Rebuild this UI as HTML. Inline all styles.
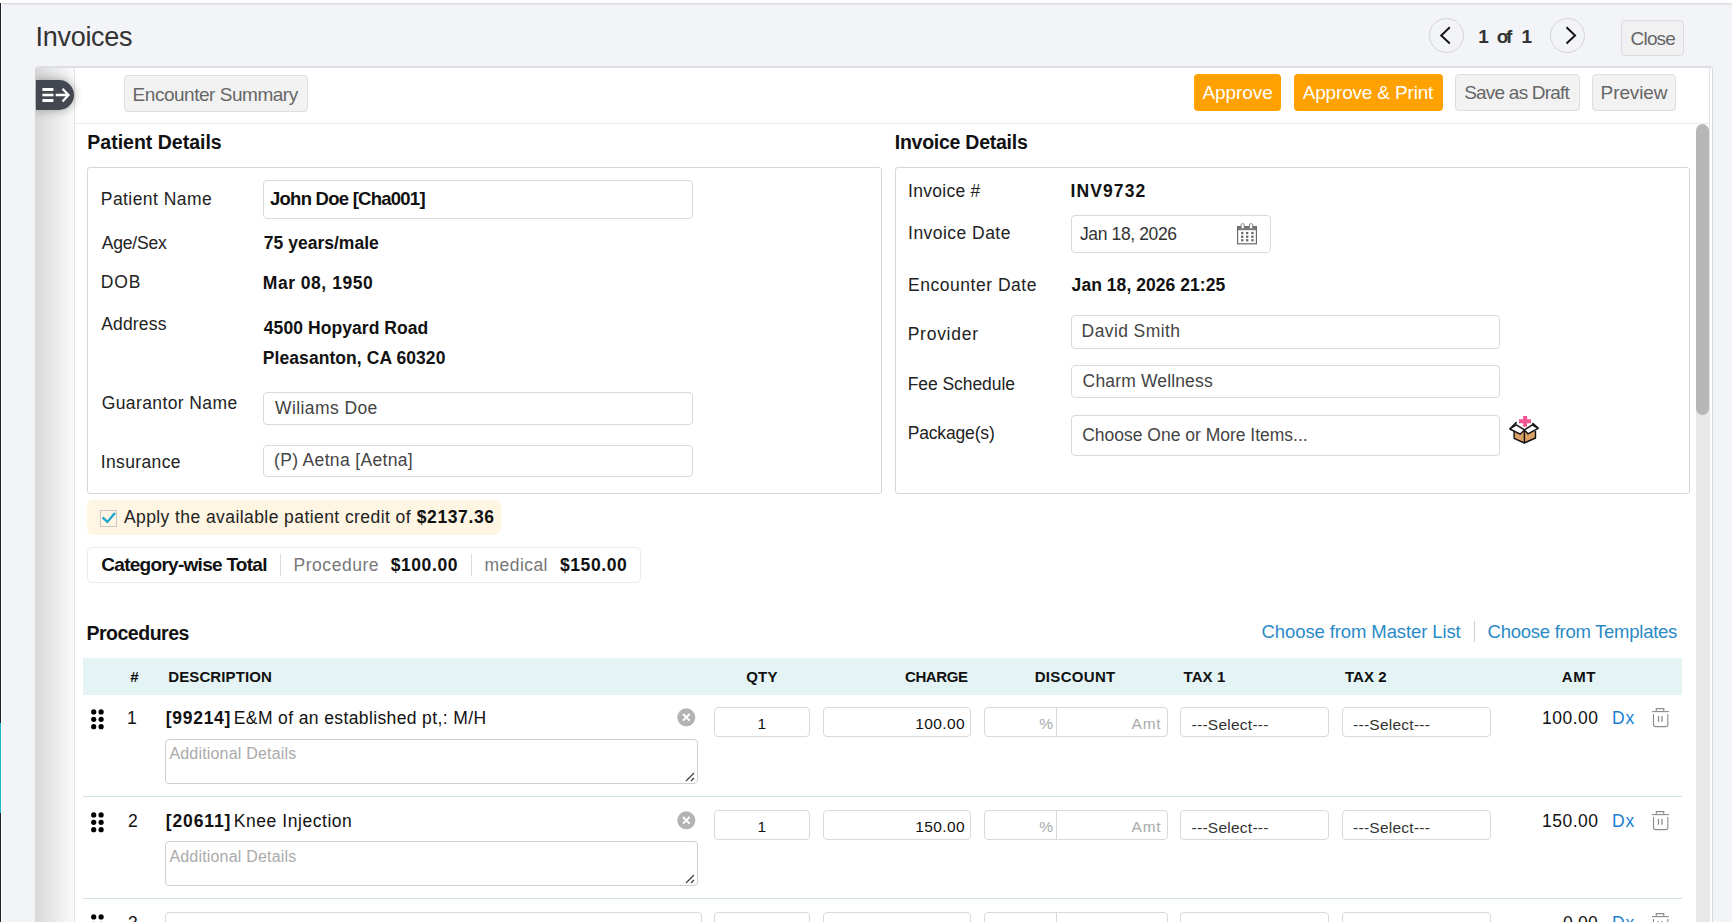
<!DOCTYPE html>
<html><head><meta charset="utf-8"><title>Invoices</title><style>
*{margin:0;padding:0}
html,body{width:1732px;height:922px;overflow:hidden;background:#fff}
body{position:relative;font-family:"Liberation Sans",sans-serif}
.b{position:absolute}
.t{position:absolute;white-space:pre;font-family:"Liberation Sans",sans-serif}
</style></head>
<body>
<div class="b" style="left:2px;top:3px;width:1730px;height:919px;background:#f3f4f8"></div>
<div class="b" style="left:2px;top:3px;width:1730px;height:3px;background:linear-gradient(#dadbdf,#f3f4f8)"></div>
<div class="b" style="left:0px;top:3px;width:1px;height:919px;background:#1d2230"></div>
<div class="b" style="left:0px;top:723px;width:1px;height:90px;background:#1eb4d8"></div>
<div class="b" style="left:1429px;top:18px;width:35px;height:35px;border:1px solid #d4d4d4;border-radius:50%;box-sizing:border-box"></div>
<div class="b" style="left:1550px;top:18px;width:35px;height:35px;border:1px solid #d4d4d4;border-radius:50%;box-sizing:border-box"></div>
<svg class="b" style="left:1429px;top:18px" width="35" height="35"><path d="M20.8 9.3 L12.2 17.5 L20.8 25.5" fill="none" stroke="#111" stroke-width="1.9"/></svg>
<svg class="b" style="left:1550px;top:18px" width="35" height="35"><path d="M16.5 9.3 L25.1 17.5 L16.5 25.5" fill="none" stroke="#111" stroke-width="1.9"/></svg>
<div class="b" style="left:1621px;top:20px;width:63px;height:36px;background:#f1f1f2;border:1px solid #dcdcdc;border-radius:4px;box-sizing:border-box"></div>
<div class="b" style="left:35px;top:66px;width:1678px;height:856px;background:#fff;border-top:2px solid #dedfe2;border-right:1px solid #d8d9dc;border-top-right-radius:4px;border-top-left-radius:4px;box-sizing:border-box"></div>
<div class="b" style="left:35px;top:68px;width:40px;height:854px;overflow:hidden"><div class="b" style="left:0;top:0;width:39px;height:854px;background:linear-gradient(90deg,#d9d7d7 0%,#e5e6e6 40%,#fafafa 100%)"></div><div class="b" style="left:39px;top:0;width:1px;height:854px;background:#e3e3e3"></div><div class="b" style="left:1px;top:12px;width:38px;height:30px;background:#434850;border-radius:0 15px 15px 0;box-shadow:0 0 9px 1px rgba(0,0,0,.28)"></div><svg class="b" style="left:0;top:12px" width="39" height="30"><g fill="#fff"><rect x="7.4" y="8" width="11" height="3"/><rect x="7.4" y="13.7" width="11" height="2.6"/><rect x="7.4" y="19" width="11" height="3"/></g><path d="M20.7 15 H33.5 M27.5 8.8 L33.5 15 L27.5 21.5" fill="none" stroke="#fff" stroke-width="2.3"/></svg></div>
<div class="b" style="left:75px;top:68px;width:30px;height:60px;overflow:hidden"><div class="b" style="left:-39px;top:12px;width:38px;height:30px;border-radius:0 15px 15px 0;box-shadow:0 0 9px 1px rgba(0,0,0,.28)"></div></div>
<div class="b" style="left:1709px;top:68px;width:1px;height:854px;background:#e4e4e4"></div>
<div class="b" style="left:75px;top:123px;width:1634px;height:1px;background:#ebebeb"></div>
<div class="b" style="left:124px;top:75px;width:184px;height:37px;background:#f2f2f2;border:1px solid #dedede;border-radius:4px;box-sizing:border-box"></div>
<div class="b" style="left:1194px;top:74px;width:87px;height:37px;background:#ffa100;border-radius:4px"></div>
<div class="b" style="left:1294px;top:74px;width:149px;height:37px;background:#ffa100;border-radius:4px"></div>
<div class="b" style="left:1455px;top:74px;width:125px;height:37px;background:#f2f2f2;border:1px solid #dedede;border-radius:4px;box-sizing:border-box"></div>
<div class="b" style="left:1592px;top:74px;width:84px;height:37px;background:#f2f2f2;border:1px solid #dedede;border-radius:4px;box-sizing:border-box"></div>
<div class="b" style="left:1696px;top:409px;width:13px;height:513px;background:#e8e8e8"></div>
<div class="b" style="left:1696px;top:124px;width:13px;height:291px;background:#b7b7b7;border-radius:6.5px"></div>
<div class="b" style="left:87px;top:167px;width:795px;height:327px;border:1px solid #d6d6d6;border-radius:3px;box-sizing:border-box"></div>
<div class="b" style="left:895px;top:167px;width:795px;height:327px;border:1px solid #d6d6d6;border-radius:3px;box-sizing:border-box"></div>
<div class="b" style="left:263px;top:180px;width:430px;height:39px;border:1px solid #d9d9d9;border-radius:4px;box-sizing:border-box;background:#fff"></div>
<div class="b" style="left:263px;top:392px;width:430px;height:33px;border:1px solid #d9d9d9;border-radius:4px;box-sizing:border-box;background:#fff"></div>
<div class="b" style="left:263px;top:445px;width:430px;height:32px;border:1px solid #d9d9d9;border-radius:4px;box-sizing:border-box;background:#fff"></div>
<div class="b" style="left:1071px;top:215px;width:200px;height:38px;border:1px solid #d9d9d9;border-radius:4px;box-sizing:border-box;background:#fff"></div>
<div class="b" style="left:1071px;top:315px;width:429px;height:34px;border:1px solid #d9d9d9;border-radius:4px;box-sizing:border-box;background:#fff"></div>
<div class="b" style="left:1071px;top:365px;width:429px;height:33px;border:1px solid #d9d9d9;border-radius:4px;box-sizing:border-box;background:#fff"></div>
<div class="b" style="left:1071px;top:415px;width:429px;height:41px;border:1px solid #d9d9d9;border-radius:4px;box-sizing:border-box;background:#fff"></div>
<svg class="b" style="left:1237px;top:223px" width="21" height="22"><rect x="0" y="3" width="20" height="4.2" fill="#7a7a7a"/><rect x="0.6" y="3.6" width="18.8" height="17.2" fill="none" stroke="#6a6a6a" stroke-width="1.2"/><rect x="4.1" y="0.6" width="3.1" height="5.2" rx="1.3" fill="#fff" stroke="#777" stroke-width="0.9"/><rect x="12.5" y="0.6" width="3.1" height="5.2" rx="1.3" fill="#fff" stroke="#777" stroke-width="0.9"/><g fill="#6a6a6a"><rect x="4.1" y="8.9" width="2.3" height="2.3"/><rect x="4.1" y="12.6" width="2.3" height="2.3"/><rect x="4.1" y="16.099999999999998" width="2.3" height="2.3"/><rect x="9.0" y="8.9" width="2.3" height="2.3"/><rect x="9.0" y="12.6" width="2.3" height="2.3"/><rect x="9.0" y="16.099999999999998" width="2.3" height="2.3"/><rect x="14.3" y="8.9" width="2.3" height="2.3"/><rect x="14.3" y="12.6" width="2.3" height="2.3"/><rect x="14.3" y="16.099999999999998" width="2.3" height="2.3"/></g></svg>
<svg class="b" style="left:1490px;top:400px" width="60" height="50"><path d="M24.1 30.5 V38.4 L34.3 43 L45.5 38 V31" fill="#d9a066" stroke="#111" stroke-width="1.4" stroke-linejoin="round"/><path d="M34.4 30 V43" stroke="#111" stroke-width="1.4"/><path d="M19.8 29 L26.7 22.1" stroke="#111" stroke-width="1.5"/><path d="M42.3 23.3 L48.1 28.3" stroke="#111" stroke-width="1.8"/><path d="M19.8 29 L26.3 24.8 L34.5 29.9 L30.3 34.1 Z" fill="#fff" stroke="#111" stroke-width="1.4" stroke-linejoin="round"/><path d="M34.5 29.9 L42.3 24.8 L48.1 28.3 L37.9 33.8 Z" fill="#fff" stroke="#111" stroke-width="1.4" stroke-linejoin="round"/><path d="M33.1 15.9 h4 v3.3 h3.9 v4.1 h-3.9 v3.4 h-4 v-3.4 h-4.1 v-4.1 h4.1 z" fill="#f25592"/></svg>
<div class="b" style="left:87px;top:500px;width:414px;height:35px;background:#fff5e3;border-radius:6px"></div>
<div class="b" style="left:100px;top:510px;width:17px;height:17px;border:1px solid #c8c8c8;box-sizing:border-box"></div>
<svg class="b" style="left:100px;top:510px" width="17" height="17"><path d="M2.6 7.4 L7.4 11.9 L15 3" fill="none" stroke="#1ba5cc" stroke-width="2.3"/></svg>
<div class="b" style="left:87px;top:547px;width:554px;height:36px;border:1px solid #ececec;border-radius:5px;box-sizing:border-box"></div>
<div class="b" style="left:280px;top:554px;width:1px;height:22px;background:#dcdcdc"></div>
<div class="b" style="left:471px;top:554px;width:1px;height:22px;background:#dcdcdc"></div>
<div class="b" style="left:1474px;top:621px;width:1px;height:21px;background:#cfcfcf"></div>
<div class="b" style="left:83px;top:658px;width:1599px;height:37px;background:#e4f4f5"></div>
<div class="b" style="left:83px;top:796px;width:1599px;height:1px;background:#cfe2e5"></div>
<svg class="b" style="left:90px;top:709px" width="15" height="21"><g fill="#000"><circle cx="3.7" cy="2.9" r="2.6"/><circle cx="3.7" cy="10.3" r="2.6"/><circle cx="3.7" cy="17.7" r="2.6"/><circle cx="11.1" cy="2.9" r="2.6"/><circle cx="11.1" cy="10.3" r="2.6"/><circle cx="11.1" cy="17.7" r="2.6"/></g></svg>
<svg class="b" style="left:677px;top:708px" width="19" height="19"><circle cx="9.3" cy="9.3" r="9" fill="#b3b3b3"/><path d="M6 6 L12.6 12.6 M12.6 6 L6 12.6" stroke="#fff" stroke-width="2"/></svg>
<div class="b" style="left:165px;top:739px;width:533px;height:45px;border:1px solid #d0d0d0;border-radius:4px;box-sizing:border-box"></div>
<svg class="b" style="left:684px;top:772px" width="12" height="10"><path d="M2 9 L10 1 M7 9 L10 6" stroke="#444" stroke-width="1.3"/></svg>
<div class="b" style="left:714px;top:707px;width:96px;height:30px;border:1px solid #d9d9d9;border-radius:4px;box-sizing:border-box;background:#fff"></div>
<div class="b" style="left:823px;top:707px;width:148px;height:30px;border:1px solid #d9d9d9;border-radius:4px;box-sizing:border-box;background:#fff"></div>
<div class="b" style="left:984px;top:707px;width:184px;height:30px;border:1px solid #d9d9d9;border-radius:4px;box-sizing:border-box;background:#fff"></div>
<div class="b" style="left:1056px;top:707px;width:1px;height:30px;background:#d9d9d9"></div>
<div class="b" style="left:1180px;top:707px;width:149px;height:30px;border:1px solid #d9d9d9;border-radius:4px;box-sizing:border-box;background:#fff"></div>
<div class="b" style="left:1342px;top:707px;width:149px;height:30px;border:1px solid #d9d9d9;border-radius:4px;box-sizing:border-box;background:#fff"></div>
<svg class="b" style="left:1651px;top:707px" width="19" height="21"><g fill="none" stroke="#8c8c8c" stroke-width="1.1"><path d="M1 4.6 H18"/><path d="M5.3 4.6 V1.6 H12.8 V4.6"/><path d="M2.5 7 V17.5 Q2.5 19.6 4.6 19.6 H14.7 Q16.8 19.6 16.8 17.5 V7"/><path d="M7.5 9 V14.8 M11 9 V14.8" stroke-width="1.3"/></g></svg>
<div class="b" style="left:83px;top:898px;width:1599px;height:1px;background:#cfe2e5"></div>
<svg class="b" style="left:90px;top:812px" width="15" height="21"><g fill="#000"><circle cx="3.7" cy="2.9" r="2.6"/><circle cx="3.7" cy="10.3" r="2.6"/><circle cx="3.7" cy="17.7" r="2.6"/><circle cx="11.1" cy="2.9" r="2.6"/><circle cx="11.1" cy="10.3" r="2.6"/><circle cx="11.1" cy="17.7" r="2.6"/></g></svg>
<svg class="b" style="left:677px;top:811px" width="19" height="19"><circle cx="9.3" cy="9.3" r="9" fill="#b3b3b3"/><path d="M6 6 L12.6 12.6 M12.6 6 L6 12.6" stroke="#fff" stroke-width="2"/></svg>
<div class="b" style="left:165px;top:841px;width:533px;height:45px;border:1px solid #d0d0d0;border-radius:4px;box-sizing:border-box"></div>
<svg class="b" style="left:684px;top:874px" width="12" height="10"><path d="M2 9 L10 1 M7 9 L10 6" stroke="#444" stroke-width="1.3"/></svg>
<div class="b" style="left:714px;top:810px;width:96px;height:30px;border:1px solid #d9d9d9;border-radius:4px;box-sizing:border-box;background:#fff"></div>
<div class="b" style="left:823px;top:810px;width:148px;height:30px;border:1px solid #d9d9d9;border-radius:4px;box-sizing:border-box;background:#fff"></div>
<div class="b" style="left:984px;top:810px;width:184px;height:30px;border:1px solid #d9d9d9;border-radius:4px;box-sizing:border-box;background:#fff"></div>
<div class="b" style="left:1056px;top:810px;width:1px;height:30px;background:#d9d9d9"></div>
<div class="b" style="left:1180px;top:810px;width:149px;height:30px;border:1px solid #d9d9d9;border-radius:4px;box-sizing:border-box;background:#fff"></div>
<div class="b" style="left:1342px;top:810px;width:149px;height:30px;border:1px solid #d9d9d9;border-radius:4px;box-sizing:border-box;background:#fff"></div>
<svg class="b" style="left:1651px;top:810px" width="19" height="21"><g fill="none" stroke="#8c8c8c" stroke-width="1.1"><path d="M1 4.6 H18"/><path d="M5.3 4.6 V1.6 H12.8 V4.6"/><path d="M2.5 7 V17.5 Q2.5 19.6 4.6 19.6 H14.7 Q16.8 19.6 16.8 17.5 V7"/><path d="M7.5 9 V14.8 M11 9 V14.8" stroke-width="1.3"/></g></svg>
<svg class="b" style="left:90px;top:914px" width="15" height="21"><g fill="#000"><circle cx="3.7" cy="2.9" r="2.6"/><circle cx="3.7" cy="10.3" r="2.6"/><circle cx="3.7" cy="17.7" r="2.6"/><circle cx="11.1" cy="2.9" r="2.6"/><circle cx="11.1" cy="10.3" r="2.6"/><circle cx="11.1" cy="17.7" r="2.6"/></g></svg>
<div class="b" style="left:165px;top:912px;width:537px;height:38px;border:1px solid #d9d9d9;border-radius:4px;box-sizing:border-box;background:#fff"></div>
<div class="b" style="left:714px;top:912px;width:96px;height:40px;border:1px solid #d9d9d9;border-radius:4px;box-sizing:border-box;background:#fff"></div>
<div class="b" style="left:823px;top:912px;width:148px;height:40px;border:1px solid #d9d9d9;border-radius:4px;box-sizing:border-box;background:#fff"></div>
<div class="b" style="left:984px;top:912px;width:184px;height:40px;border:1px solid #d9d9d9;border-radius:4px;box-sizing:border-box;background:#fff"></div>
<div class="b" style="left:1056px;top:912px;width:1px;height:40px;background:#d9d9d9"></div>
<div class="b" style="left:1180px;top:912px;width:149px;height:40px;border:1px solid #d9d9d9;border-radius:4px;box-sizing:border-box;background:#fff"></div>
<div class="b" style="left:1342px;top:912px;width:149px;height:40px;border:1px solid #d9d9d9;border-radius:4px;box-sizing:border-box;background:#fff"></div>
<svg class="b" style="left:1651px;top:912px" width="19" height="21"><g fill="none" stroke="#8c8c8c" stroke-width="1.1"><path d="M1 4.6 H18"/><path d="M5.3 4.6 V1.6 H12.8 V4.6"/><path d="M2.5 7 V17.5 Q2.5 19.6 4.6 19.6 H14.7 Q16.8 19.6 16.8 17.5 V7"/><path d="M7.5 9 V14.8 M11 9 V14.8" stroke-width="1.3"/></g></svg>
<div class="t" style="left:35.6px;top:24.1px;font-size:27px;line-height:27px;font-weight:400;color:#333;letter-spacing:-0.307px">Invoices</div>
<div class="t" style="left:1478.2px;top:27px;font-size:19px;line-height:19px;font-weight:700;color:#333;letter-spacing:0px">1</div>
<div class="t" style="left:1496.7px;top:27px;font-size:19px;line-height:19px;font-weight:700;color:#333;letter-spacing:-2.306px">of</div>
<div class="t" style="left:1521.4px;top:27px;font-size:19px;line-height:19px;font-weight:700;color:#333;letter-spacing:0px">1</div>
<div class="t" style="left:1630.6px;top:28.9px;font-size:19px;line-height:19px;font-weight:400;color:#666;letter-spacing:-0.827px">Close</div>
<div class="t" style="left:132.6px;top:84.9px;font-size:19px;line-height:19px;font-weight:400;color:#666;letter-spacing:-0.474px">Encounter Summary</div>
<div class="t" style="left:1202.5px;top:82.9px;font-size:19px;line-height:19px;font-weight:400;color:#fff;letter-spacing:-0.067px">Approve</div>
<div class="t" style="left:1302.7px;top:82.9px;font-size:19px;line-height:19px;font-weight:400;color:#fff;letter-spacing:-0.17px">Approve &amp; Print</div>
<div class="t" style="left:1464.2px;top:82.7px;font-size:19px;line-height:19px;font-weight:400;color:#666;letter-spacing:-0.785px">Save as Draft</div>
<div class="t" style="left:1600.6px;top:82.7px;font-size:19px;line-height:19px;font-weight:400;color:#666;letter-spacing:-0.109px">Preview</div>
<div class="t" style="left:87.3px;top:132.1px;font-size:19.5px;line-height:20px;font-weight:700;color:#111;letter-spacing:-0.002px">Patient Details</div>
<div class="t" style="left:894.8px;top:132.1px;font-size:19.5px;line-height:20px;font-weight:700;color:#111;letter-spacing:-0.258px">Invoice Details</div>
<div class="t" style="left:100.8px;top:189.6px;font-size:17.5px;line-height:18px;font-weight:400;color:#222;letter-spacing:0.437px">Patient Name</div>
<div class="t" style="left:101.8px;top:233.9px;font-size:17.5px;line-height:18px;font-weight:400;color:#222;letter-spacing:-0.217px">Age/Sex</div>
<div class="t" style="left:100.8px;top:273.2px;font-size:17.5px;line-height:18px;font-weight:400;color:#222;letter-spacing:0.825px">DOB</div>
<div class="t" style="left:101.2px;top:315px;font-size:17.5px;line-height:18px;font-weight:400;color:#222;letter-spacing:0.175px">Address</div>
<div class="t" style="left:101.7px;top:394px;font-size:17.5px;line-height:18px;font-weight:400;color:#222;letter-spacing:0.392px">Guarantor Name</div>
<div class="t" style="left:100.7px;top:452.7px;font-size:17.5px;line-height:18px;font-weight:400;color:#222;letter-spacing:0.372px">Insurance</div>
<div class="t" style="left:270px;top:189.9px;font-size:18.5px;line-height:18px;font-weight:700;color:#111;letter-spacing:-0.75px">John Doe [Cha001]</div>
<div class="t" style="left:263.8px;top:233.5px;font-size:17.5px;line-height:18px;font-weight:700;color:#111;letter-spacing:0.01px">75 years/male</div>
<div class="t" style="left:262.8px;top:273.5px;font-size:17.5px;line-height:18px;font-weight:700;color:#111;letter-spacing:0.521px">Mar 08, 1950</div>
<div class="t" style="left:263.8px;top:318.7px;font-size:17.5px;line-height:18px;font-weight:700;color:#111;letter-spacing:0.069px">4500 Hopyard Road</div>
<div class="t" style="left:262.8px;top:348.6px;font-size:17.5px;line-height:18px;font-weight:700;color:#111;letter-spacing:0.071px">Pleasanton, CA 60320</div>
<div class="t" style="left:275px;top:399.3px;font-size:17.5px;line-height:18px;font-weight:400;color:#444;letter-spacing:0.413px">Wiliams Doe</div>
<div class="t" style="left:274px;top:451.1px;font-size:17.5px;line-height:18px;font-weight:400;color:#444;letter-spacing:0.339px">(P) Aetna [Aetna]</div>
<div class="t" style="left:908.1px;top:182.1px;font-size:17.5px;line-height:18px;font-weight:400;color:#222;letter-spacing:0.274px">Invoice #</div>
<div class="t" style="left:908.1px;top:224.3px;font-size:17.5px;line-height:18px;font-weight:400;color:#222;letter-spacing:0.46px">Invoice Date</div>
<div class="t" style="left:908.1px;top:275.5px;font-size:17.5px;line-height:18px;font-weight:400;color:#222;letter-spacing:0.518px">Encounter Date</div>
<div class="t" style="left:907.7px;top:325px;font-size:17.5px;line-height:18px;font-weight:400;color:#222;letter-spacing:0.738px">Provider</div>
<div class="t" style="left:907.7px;top:374.5px;font-size:17.5px;line-height:18px;font-weight:400;color:#222;letter-spacing:-0.06px">Fee Schedule</div>
<div class="t" style="left:907.7px;top:424.4px;font-size:17.5px;line-height:18px;font-weight:400;color:#222;letter-spacing:-0.165px">Package(s)</div>
<div class="t" style="left:1070.6px;top:182px;font-size:17.5px;line-height:18px;font-weight:700;color:#111;letter-spacing:1.088px">INV9732</div>
<div class="t" style="left:1080px;top:225px;font-size:17.5px;line-height:18px;font-weight:400;color:#333;letter-spacing:-0.379px">Jan 18, 2026</div>
<div class="t" style="left:1071.6px;top:275.5px;font-size:17.5px;line-height:18px;font-weight:700;color:#111;letter-spacing:0.051px">Jan 18, 2026 21:25</div>
<div class="t" style="left:1081.6px;top:322.1px;font-size:17.5px;line-height:18px;font-weight:400;color:#444;letter-spacing:0.4px">David Smith</div>
<div class="t" style="left:1082.6px;top:371.9px;font-size:17.5px;line-height:18px;font-weight:400;color:#444;letter-spacing:0.154px">Charm Wellness</div>
<div class="t" style="left:1082.2px;top:425.7px;font-size:17.5px;line-height:18px;font-weight:400;color:#444;letter-spacing:-0.007px">Choose One or More Items...</div>
<div class="t" style="left:123.9px;top:507.7px;font-size:17.5px;line-height:18px;font-weight:400;color:#222;letter-spacing:0.423px">Apply the available patient credit of</div>
<div class="t" style="left:416.7px;top:507.7px;font-size:17.5px;line-height:18px;font-weight:700;color:#111;letter-spacing:0.62px">$2137.36</div>
<div class="t" style="left:101.3px;top:555px;font-size:19px;line-height:19px;font-weight:700;color:#111;letter-spacing:-0.719px">Category-wise Total</div>
<div class="t" style="left:293.5px;top:555.8px;font-size:17.5px;line-height:18px;font-weight:400;color:#777;letter-spacing:0.536px">Procedure</div>
<div class="t" style="left:390.7px;top:555.8px;font-size:17.5px;line-height:18px;font-weight:700;color:#111;letter-spacing:0.579px">$100.00</div>
<div class="t" style="left:484.5px;top:555.8px;font-size:17.5px;line-height:18px;font-weight:400;color:#777;letter-spacing:0.448px">medical</div>
<div class="t" style="left:559.9px;top:555.8px;font-size:17.5px;line-height:18px;font-weight:700;color:#111;letter-spacing:0.612px">$150.00</div>
<div class="t" style="left:86.5px;top:623.1px;font-size:19.5px;line-height:20px;font-weight:700;color:#111;letter-spacing:-0.495px">Procedures</div>
<div class="t" style="left:1261.6px;top:622.5px;font-size:18.5px;line-height:18px;font-weight:400;color:#2a8ac6;letter-spacing:-0.108px">Choose from Master List</div>
<div class="t" style="left:1487.6px;top:622.5px;font-size:18.5px;line-height:18px;font-weight:400;color:#2a8ac6;letter-spacing:-0.266px">Choose from Templates</div>
<div class="t" style="left:130.3px;top:669px;font-size:15px;line-height:15px;font-weight:700;color:#111;letter-spacing:0px">#</div>
<div class="t" style="left:168.2px;top:669px;font-size:15px;line-height:15px;font-weight:700;color:#111;letter-spacing:0.122px">DESCRIPTION</div>
<div class="t" style="left:746.2px;top:669px;font-size:15px;line-height:15px;font-weight:700;color:#111;letter-spacing:0.185px">QTY</div>
<div class="t" style="left:905px;top:669px;font-size:15px;line-height:15px;font-weight:700;color:#111;letter-spacing:-0.42px">CHARGE</div>
<div class="t" style="left:1034.7px;top:669px;font-size:15px;line-height:15px;font-weight:700;color:#111;letter-spacing:0.319px">DISCOUNT</div>
<div class="t" style="left:1183.5px;top:669px;font-size:15px;line-height:15px;font-weight:700;color:#111;letter-spacing:0.086px">TAX 1</div>
<div class="t" style="left:1345px;top:669px;font-size:15px;line-height:15px;font-weight:700;color:#111;letter-spacing:0.036px">TAX 2</div>
<div class="t" style="left:1561.8px;top:669px;font-size:15px;line-height:15px;font-weight:700;color:#111;letter-spacing:0.586px">AMT</div>
<div class="t" style="left:127px;top:708.9px;font-size:17.5px;line-height:18px;font-weight:400;color:#111;letter-spacing:0px">1</div>
<div class="t" style="left:165.7px;top:708.8px;font-size:17.5px;line-height:18px;font-weight:700;color:#111;letter-spacing:0.735px">[99214]</div>
<div class="t" style="left:233.8px;top:708.8px;font-size:17.5px;line-height:18px;font-weight:400;color:#111;letter-spacing:0.38px">E&amp;M of an established pt,: M/H</div>
<div class="t" style="left:169.4px;top:745.9px;font-size:16px;line-height:16px;font-weight:400;color:#aaa;letter-spacing:0.187px">Additional Details</div>
<div class="t" style="left:757.5px;top:716px;font-size:15.5px;line-height:16px;font-weight:400;color:#111;letter-spacing:0px">1</div>
<div class="t" style="left:915.2px;top:716px;font-size:15.5px;line-height:16px;font-weight:400;color:#111;letter-spacing:0.402px">100.00</div>
<div class="t" style="left:1039.2px;top:716px;font-size:15.5px;line-height:16px;font-weight:400;color:#aaa;letter-spacing:0px">%</div>
<div class="t" style="left:1131.6px;top:716px;font-size:15.5px;line-height:16px;font-weight:400;color:#aaa;letter-spacing:0.725px">Amt</div>
<div class="t" style="left:1191.6px;top:716.5px;font-size:15.5px;line-height:16px;font-weight:400;color:#333;letter-spacing:0.247px">---Select---</div>
<div class="t" style="left:1353.1px;top:716.5px;font-size:15.5px;line-height:16px;font-weight:400;color:#333;letter-spacing:0.247px">---Select---</div>
<div class="t" style="left:1542px;top:708.6px;font-size:17.5px;line-height:18px;font-weight:400;color:#111;letter-spacing:0.481px">100.00</div>
<div class="t" style="left:1611.9px;top:708.6px;font-size:17.5px;line-height:18px;font-weight:400;color:#1a7fd4;letter-spacing:0.962px">Dx</div>
<div class="t" style="left:128px;top:811.9px;font-size:17.5px;line-height:18px;font-weight:400;color:#111;letter-spacing:0px">2</div>
<div class="t" style="left:165.7px;top:811.8px;font-size:17.5px;line-height:18px;font-weight:700;color:#111;letter-spacing:0.896px">[20611]</div>
<div class="t" style="left:233.8px;top:811.8px;font-size:17.5px;line-height:18px;font-weight:400;color:#111;letter-spacing:0.548px">Knee Injection</div>
<div class="t" style="left:169.4px;top:848.9px;font-size:16px;line-height:16px;font-weight:400;color:#aaa;letter-spacing:0.187px">Additional Details</div>
<div class="t" style="left:757.5px;top:819px;font-size:15.5px;line-height:16px;font-weight:400;color:#111;letter-spacing:0px">1</div>
<div class="t" style="left:915.2px;top:819px;font-size:15.5px;line-height:16px;font-weight:400;color:#111;letter-spacing:0.402px">150.00</div>
<div class="t" style="left:1039.2px;top:819px;font-size:15.5px;line-height:16px;font-weight:400;color:#aaa;letter-spacing:0px">%</div>
<div class="t" style="left:1131.6px;top:819px;font-size:15.5px;line-height:16px;font-weight:400;color:#aaa;letter-spacing:0.725px">Amt</div>
<div class="t" style="left:1191.6px;top:819.5px;font-size:15.5px;line-height:16px;font-weight:400;color:#333;letter-spacing:0.247px">---Select---</div>
<div class="t" style="left:1353.1px;top:819.5px;font-size:15.5px;line-height:16px;font-weight:400;color:#333;letter-spacing:0.247px">---Select---</div>
<div class="t" style="left:1542px;top:811.6px;font-size:17.5px;line-height:18px;font-weight:400;color:#111;letter-spacing:0.481px">150.00</div>
<div class="t" style="left:1611.9px;top:811.6px;font-size:17.5px;line-height:18px;font-weight:400;color:#1a7fd4;letter-spacing:0.962px">Dx</div>
<div class="t" style="left:128px;top:913.9px;font-size:17.5px;line-height:18px;font-weight:400;color:#111;letter-spacing:0px">3</div>
<div class="t" style="left:1562.9px;top:913.6px;font-size:17.5px;line-height:18px;font-weight:400;color:#111;letter-spacing:0.224px">0.00</div>
<div class="t" style="left:1611.9px;top:913.6px;font-size:17.5px;line-height:18px;font-weight:400;color:#1a7fd4;letter-spacing:0.962px">Dx</div>
</body></html>
